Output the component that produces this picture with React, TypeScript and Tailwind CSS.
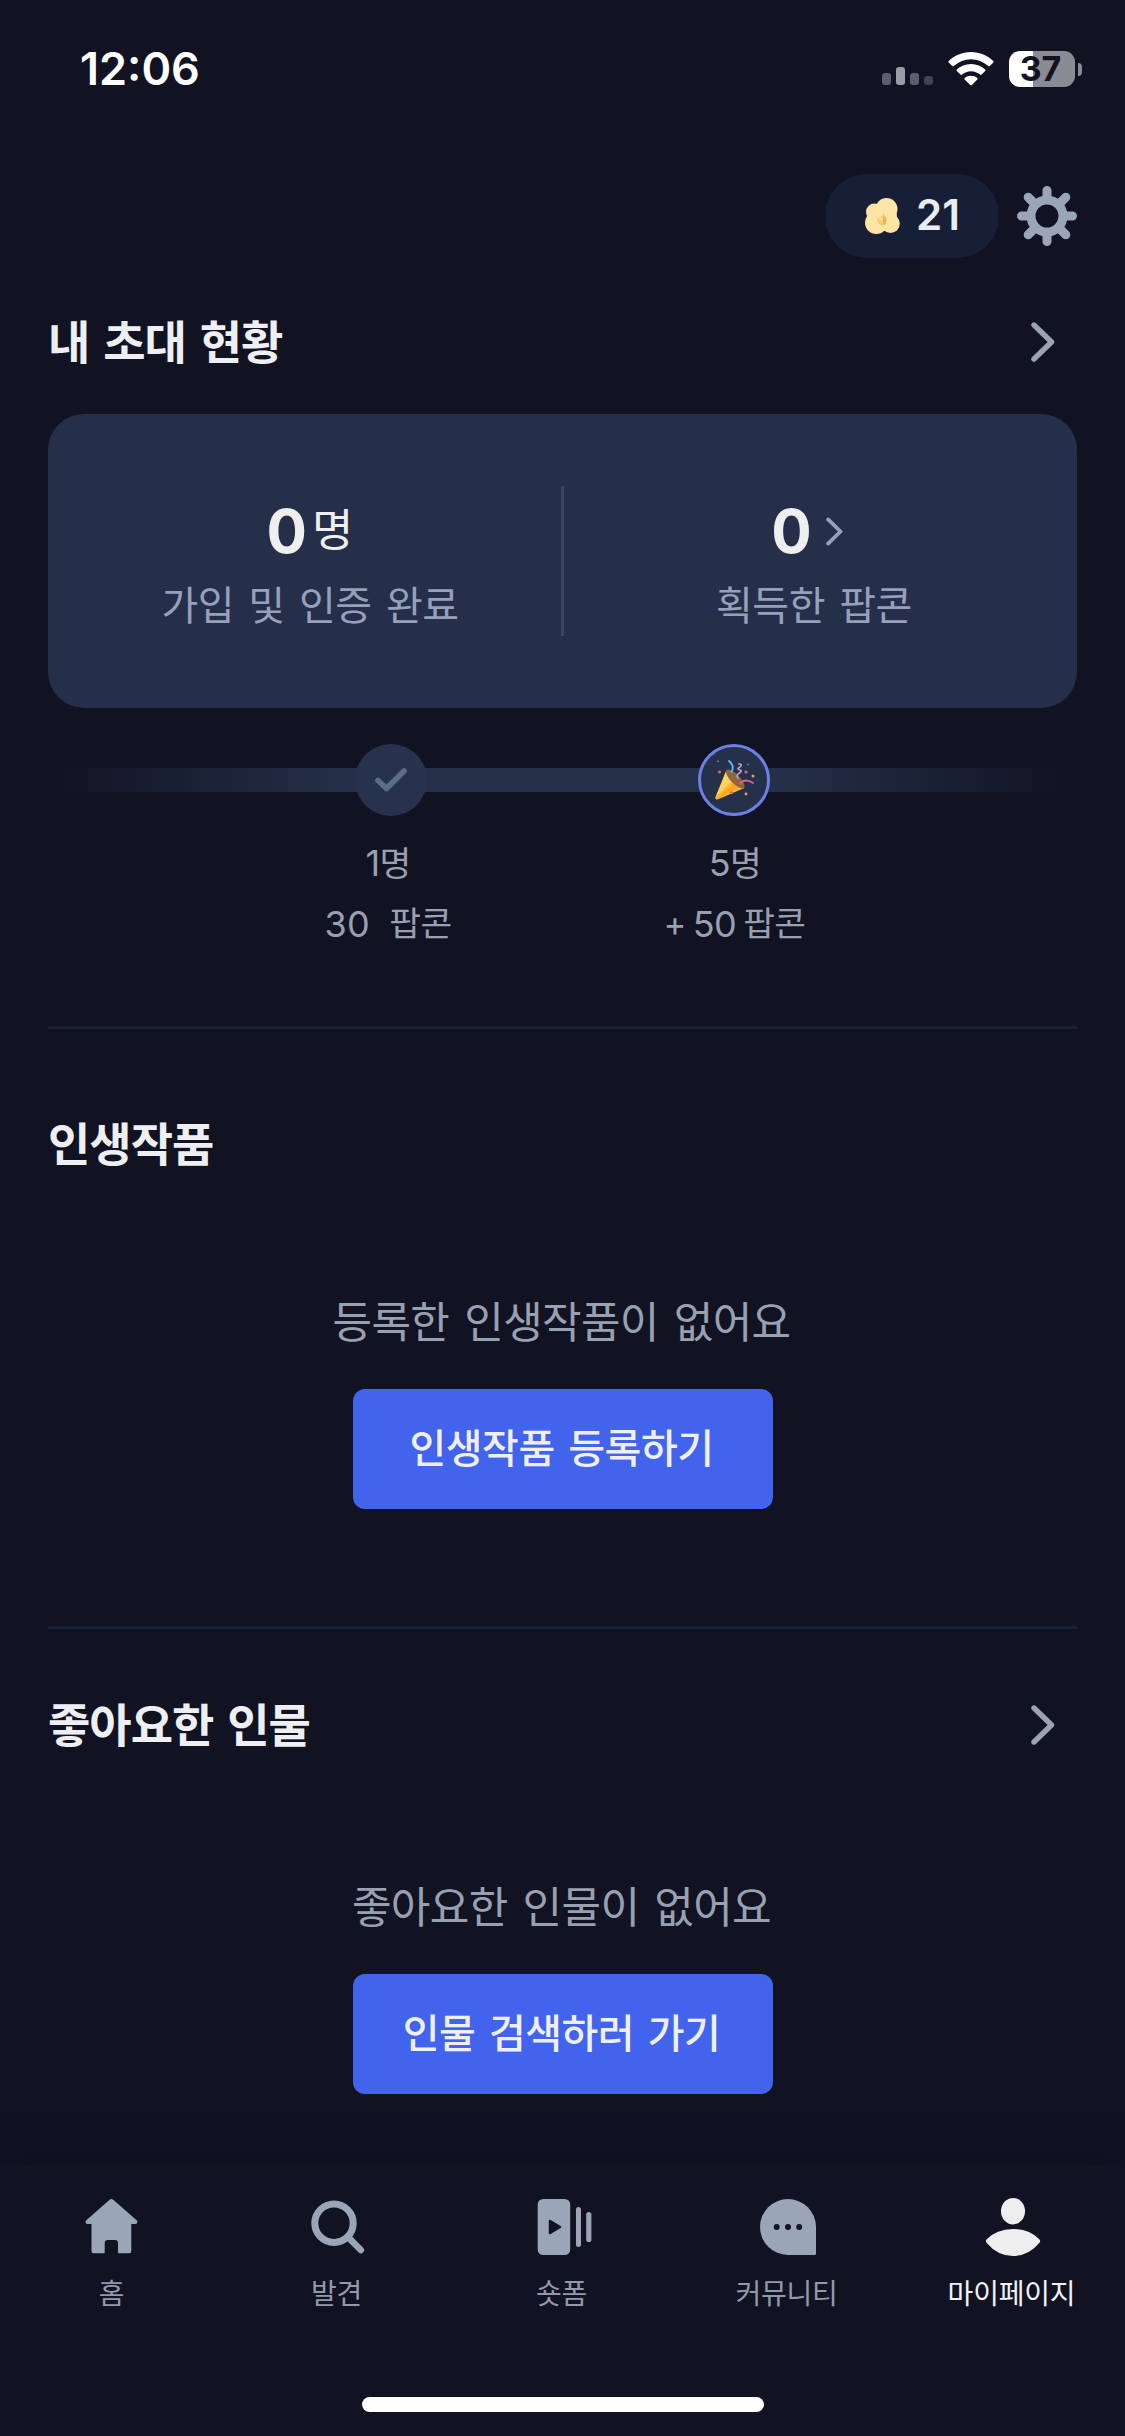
import React from 'react'

type IconProps = { className?: string }

const Chevron = ({ className }: IconProps) => (
  <svg viewBox="0 0 24 40" fill="none" className={className}>
    <path
      d="M3 3 L20.5 20 L3 37"
      stroke="currentColor"
      strokeWidth="5.4"
      strokeLinecap="round"
      strokeLinejoin="round"
    />
  </svg>
)

const PopcornIcon = () => (
  <svg viewBox="0 0 35 36" className="h-9 w-[35px]">
    <g fill="#ffe4a6">
      <circle cx="21.5" cy="11" r="11" />
      <circle cx="9.5" cy="14" r="8.5" />
      <circle cx="11.3" cy="24.7" r="11.3" />
      <circle cx="25.5" cy="25.7" r="9.3" />
      <circle cx="24" cy="18" r="8" />
    </g>
    <path d="M12 20 Q17 20 19 14 Q20 20 13 21Z" fill="#f2cd74" />
    <path d="M12 21 Q18 20 18 28 Q13 27 12 21Z" fill="#f2cd74" />
    <path d="M19 17 Q24 22 19 28 Q16 23 19 17Z" fill="#e5b44d" />
  </svg>
)

const GearIcon = () => (
  <svg viewBox="0 0 60 60" className="h-[60px] w-[60px] text-[#9aa6b8]">
    <circle cx="30" cy="30" r="16" fill="none" stroke="currentColor" strokeWidth="9" />
    <path
      d="M30 11V4.5M30 49v6.5M11 30H4.5M49 30h6.5M16.5 16.5l-5.3-5.3M43.5 43.5l5.3 5.3M16.5 43.5l-5.3 5.3M43.5 16.5l5.3-5.3"
      stroke="currentColor"
      strokeWidth="9"
      strokeLinecap="round"
    />
  </svg>
)

const PartyIcon = () => (
  <svg viewBox="0 0 40 40" fill="none" className="h-10 w-10">
    <path d="M11.5 10 L0.3 37.5 Q0 40 2.5 39.5 L29.5 28Z" fill="#fdb62f" />
    <path d="M11 11.5 L0.8 37 L17 21Z" fill="#ffd25f" />
    <path d="M24 28 L3 38 L19 23Z" fill="#f9a825" />
    <ellipse cx="20.3" cy="19" rx="12.5" ry="4.6" transform="rotate(46 20.3 19)" fill="#8f6440" />
    <path d="M14 1 Q20 6 16.5 12" stroke="#56bfe8" strokeWidth="1.8" strokeLinecap="round" />
    <path
      d="M24 4 Q28 4 25 7 Q21 9 25 10 Q28 11 23 14 Q21 16 23 18"
      stroke="#b79bc9"
      strokeWidth="1.7"
      strokeLinecap="round"
    />
    <path d="M25 23 Q31 18 38 23" stroke="#e0608a" strokeWidth="1.8" strokeLinecap="round" />
    <circle cx="4.5" cy="12" r="1.6" fill="#e0608a" />
    <circle cx="31" cy="12" r="1.6" fill="#e0608a" />
    <circle cx="16.5" cy="32.5" r="1.6" fill="#ee6a6a" />
    <circle cx="38" cy="16" r="1.5" fill="#e2a44a" />
    <circle cx="31" cy="34" r="1.4" fill="#e2a44a" />
    <circle cx="3" cy="1.3" r="1" fill="#3f93a8" />
    <circle cx="33" cy="4.5" r="0.9" fill="#3f93a8" />
  </svg>
)

const HomeIcon = () => (
  <svg viewBox="0 0 60 60" className="h-[60px] w-[60px]" fill="currentColor">
    <path d="M27.6 2.7 Q29.4 1.2 31.2 2.7 L54.6 23.2 Q55.6 24.2 55.4 25.6 Q55 27 53.4 27 H49.3 V54 Q49.3 56.2 47.1 56.2 H36 V46 Q36 43 33 43 H25.7 Q22.7 43 22.7 46 V56.2 H11.7 Q9.5 56.2 9.5 54 V27 H5.4 Q3.8 27 3.5 25.6 Q3.3 24.2 4.3 23.2Z" />
  </svg>
)

const SearchIcon = () => (
  <svg viewBox="0 0 60 60" className="h-[60px] w-[60px]" fill="none" stroke="currentColor">
    <circle cx="27" cy="26.2" r="19.2" strokeWidth="7" />
    <path d="M41 40.2 L53.8 53" strokeWidth="6.6" strokeLinecap="round" />
  </svg>
)

const ShortsIcon = () => (
  <svg viewBox="0 0 60 60" className="h-[60px] w-[60px]" fill="currentColor">
    <rect x="5.7" y="2" width="32.5" height="56" rx="5.5" />
    <rect x="44" y="10" width="5" height="40" rx="2.5" />
    <rect x="54.2" y="15" width="5.2" height="30" rx="2.6" />
    <path
      d="M18 24 V36 L28 30Z"
      fill="#111322"
      stroke="#111322"
      strokeWidth="2.5"
      strokeLinejoin="round"
    />
  </svg>
)

const CommunityIcon = () => (
  <svg viewBox="0 0 60 60" className="h-[60px] w-[60px]" fill="currentColor">
    <path d="M31 2 A28 28 0 0 1 59 30 V56.5 Q59 58 57.5 58 H31 A28 28 0 0 1 31 2Z" />
    <g fill="#111322">
      <circle cx="19.7" cy="30" r="3" />
      <circle cx="31" cy="30" r="3" />
      <circle cx="42.2" cy="30" r="3" />
    </g>
  </svg>
)

const PersonIcon = () => (
  <svg viewBox="0 0 60 60" className="h-[60px] w-[60px]" fill="#eeeeee">
    <ellipse cx="31" cy="14.2" rx="12" ry="13.3" />
    <path d="M4.5 42.5 Q14.5 32 31 32 Q47.5 32 57.5 42.5 Q58.8 44 57.5 45.8 Q46.5 59 31 59 Q15.5 59 4.5 45.8 Q3.2 44 4.5 42.5Z" />
  </svg>
)

const StatusBar = () => (
  <div className="flex h-[174px] items-start justify-between pt-[46px] pr-[43px] pl-20">
    <div className="text-[45px] leading-[46px] font-semibold text-white">12:06</div>
    <div className="flex h-[46px] items-center">
      {/* signal */}
      <div className="flex h-9 items-end gap-[5px] pb-0.5">
        <div className="h-3 w-[9px] rounded-[3px] bg-[#5d5e69]" />
        <div className="h-[18px] w-[9px] rounded-[3px] bg-[#9c9ca2]" />
        <div className="h-3 w-[9px] rounded-[3px] bg-[#5d5e69]" />
        <div className="h-[9px] w-[9px] rounded-[3px] bg-[#42434f]" />
      </div>
      {/* wifi */}
      <svg viewBox="0 0 46 34" className="ml-[15px] h-[34px] w-[46px]" fill="#ffffff">
        <path d="M23 0 C32 0 39.5 3.5 45.3 9 Q46 9.8 45.3 10.6 L41.8 14 Q41 14.7 40.2 14 C35.3 9.6 29.5 7.2 23 7.2 C16.5 7.2 10.7 9.6 5.8 14 Q5 14.7 4.2 14 L0.7 10.6 Q0 9.8 0.7 9 C6.5 3.5 14 0 23 0Z" />
        <path d="M23 12 C28.7 12 33.5 14.2 37.2 17.5 Q38 18.3 37.2 19.1 L33.6 22.5 Q32.8 23.2 32 22.6 C29.4 20.5 26.5 19.2 23 19.2 C19.5 19.2 16.6 20.5 14 22.6 Q13.2 23.2 12.4 22.5 L8.8 19.1 Q8 18.3 8.8 17.5 C12.5 14.2 17.3 12 23 12Z" />
        <path d="M23 23.8 C25.5 23.8 27.6 24.7 29.3 26 Q30 26.7 29.3 27.5 L23.8 32.9 Q23 33.6 22.2 32.9 L16.7 27.5 Q16 26.7 16.7 26 C18.4 24.7 20.5 23.8 23 23.8Z" />
      </svg>
      {/* battery */}
      <div className="ml-[15px] flex h-9 w-[66px] items-center justify-center rounded-[11px] bg-[linear-gradient(90deg,#ffffff_24px,#8b8b93_24px)] pr-[3px] text-[34px] leading-9 font-bold text-[#111322]">
        37
      </div>
      <div className="ml-[3px] h-[13px] w-1 rounded-r-full bg-[#8b8b93]" />
    </div>
  </div>
)

const SectionTitle = ({ title, link }: { title: string; link?: boolean }) => (
  <div className="flex h-[60px] items-center justify-between pr-[22px]">
    <h2 className="text-[46px] leading-[60px] font-bold tracking-[-1px] text-[#eeeff2] [word-spacing:4px]">
      {title}
    </h2>
    {link && <Chevron className="h-10 w-6 text-[#9aa3b5]" />}
  </div>
)

const EmptyBlock = ({ message, action }: { message: string; action: string }) => (
  <div className="flex flex-col items-center">
    <p className="pr-0.5 text-[43px] leading-[60px] tracking-[-0.66px] text-[#98a1b1] [word-spacing:3.6px]">
      {message}
    </p>
    <button className="mt-[37px] h-[120px] w-[420px] rounded-xl bg-[#4263eb] pr-0.5 text-[40px] font-medium tracking-[-0.5px] text-[#eeeffa] [word-spacing:3.4px]">
      {action}
    </button>
  </div>
)

const tabs = [
  { label: '홈', icon: <HomeIcon /> },
  { label: '발견', icon: <SearchIcon /> },
  { label: '숏폼', icon: <ShortsIcon /> },
  { label: '커뮤니티', icon: <CommunityIcon /> },
  { label: '마이페이지', icon: <PersonIcon />, active: true },
]

const App = () => {
  return (
    <div className="flex h-[2436px] w-[1125px] flex-col overflow-hidden bg-[#111322] font-['Inter','Noto_Sans_CJK_KR',sans-serif]">
      <StatusBar />
      {/* header */}
      <header className="flex h-[84px] items-center justify-end gap-[18px] pr-12">
        <div className="flex h-[84px] w-[174px] items-center rounded-full bg-[#171f36] pl-10">
          <PopcornIcon />
          <span className="ml-4 pb-[3px] text-[42px] leading-none font-semibold text-[#eaedf2]">
            21
          </span>
        </div>
        <GearIcon />
      </header>
      {/* content */}
      <main className="flex-1 px-12">
        <section className="h-[771px] border-b-[3px] border-[#172238] pt-[54px]">
          <SectionTitle title="내 초대 현황" link />
          {/* invite summary */}
          <div className="mt-[42px] flex h-[294px] items-center rounded-[36px] bg-[#252f4a]">
            <div className="flex w-[513px] flex-col items-center pt-[13px] pl-[11px]">
              <div className="flex h-[60px] items-center gap-[5px] text-[#eeefee]">
                <span className="text-[60px] leading-[60px] font-bold">0</span>
                <span className="text-[45px] leading-[60px]">명</span>
              </div>
              <div className="mt-[17px] text-[40px] leading-[56px] tracking-[-0.5px] text-[#96a0bb] [word-spacing:3.6px]">
                가입 및 인증 완료
              </div>
            </div>
            <div className="h-[150px] w-[3px] bg-[#3b4562]" />
            <div className="flex w-[513px] flex-col items-center pt-[13px] pr-[13px]">
              <div className="flex h-[60px] items-center gap-[14px] pr-[14px] text-[#eeefee]">
                <span className="text-[60px] leading-[60px] font-bold">0</span>
                <Chevron className="h-[29px] w-[17px] text-[#96a0bb]" />
              </div>
              <div className="mt-[17px] text-[40px] leading-[56px] tracking-[-0.5px] text-[#96a0bb] [word-spacing:3.6px]">
                획득한 팝콘
              </div>
            </div>
          </div>
          {/* reward steps */}
          <div className="mt-9 flex h-[72px] items-center bg-[linear-gradient(90deg,#25304a00,#25304a_30%,#25304a_70%,#25304a00)] bg-[length:100%_24px] bg-center bg-no-repeat">
            <div className="ml-[307px] flex h-[72px] w-[72px] items-center justify-center rounded-full bg-[#27324c]">
              <svg viewBox="0 0 32 24" className="h-6 w-8" fill="none">
                <path
                  d="M3 12.5 L11.5 20.5 L29 3"
                  stroke="#5e6b89"
                  strokeWidth="5.6"
                  strokeLinecap="round"
                  strokeLinejoin="round"
                />
              </svg>
            </div>
            <div className="ml-[271px] flex h-[72px] w-[72px] items-center justify-center rounded-full border-[3px] border-[#6a80e2] bg-[#25304a] pl-0.5">
              <PartyIcon />
            </div>
          </div>
          <div className="mt-[17px] flex text-center text-[34.5px] leading-[60px] tracking-[-0.6px] text-[#98a0b1]">
            <div className="ml-[191px] w-[300px]">
              <div className="pr-0.5">
                <span className="text-[36px]">1</span>명
              </div>
              <div className="flex justify-center gap-[19px] pr-0.5">
                <span className="text-[36px] tracking-[0.5px]">30</span>
                <span>팝콘</span>
              </div>
            </div>
            <div className="ml-[45px] w-[300px]">
              <div className="pl-0.5">
                <span className="text-[36px]">5</span>명
              </div>
              <div className="flex justify-center gap-[7px] pl-px">
                <span>+</span>
                <span className="text-[36px]">50</span>
                <span>팝콘</span>
              </div>
            </div>
          </div>
        </section>
        <section className="h-[600px] border-b-[3px] border-[#172238] pt-[85px]">
          <SectionTitle title="인생작품" />
          <div className="mt-[118px]">
            <EmptyBlock message="등록한 인생작품이 없어요" action="인생작품 등록하기" />
          </div>
        </section>
        <section className="pt-[66px]">
          <SectionTitle title="좋아요한 인물" link />
          <div className="mt-[122px]">
            <EmptyBlock message="좋아요한 인물이 없어요" action="인물 검색하러 가기" />
          </div>
        </section>
      </main>
      {/* bottom tabs */}
      <nav className="flex h-[270px] flex-col bg-[#111322] shadow-[0_-6px_30px_rgba(14,17,24,0.7)]">
        <div className="-ml-px grid w-[1125px] grid-cols-5 pt-[31px]">
          {tabs.map((tab) => (
            <div
              key={tab.label}
              className={`flex flex-col items-center ${tab.active ? 'text-[#f1f2f6]' : 'text-[#9aa6b8]'}`}
            >
              {tab.icon}
              <div
                className={`mt-[19px] text-[28px] leading-9 tracking-[-0.2px] ${tab.active ? 'text-[#f1f2f6]' : 'text-[#919aab]'}`}
              >
                {tab.label}
              </div>
            </div>
          ))}
        </div>
        {/* home indicator */}
        <div className="mx-auto mt-[85px] h-[15px] w-[402px] rounded-full bg-white" />
      </nav>
    </div>
  )
}

export default App
